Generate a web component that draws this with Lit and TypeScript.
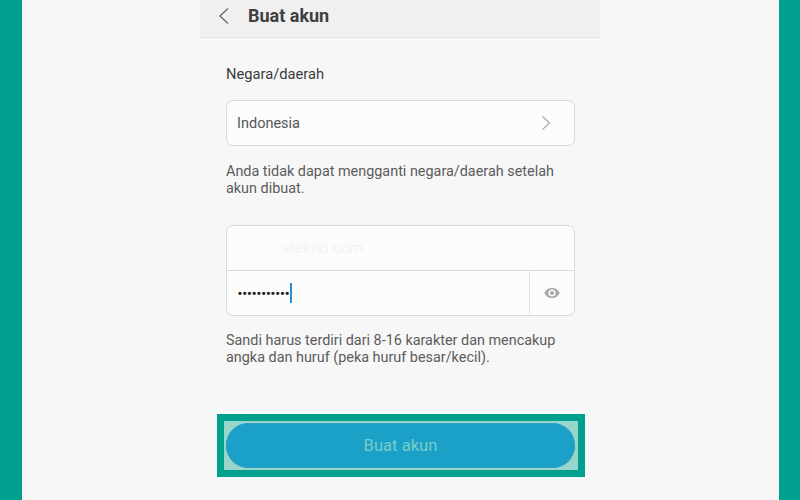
import { LitElement, html, css } from "lit";
import { customElement } from "lit/decorators.js";

@customElement("app-root")
export class AppRoot extends LitElement {
  static styles = css`
    :host { display: block; width: 800px; height: 500px; overflow: hidden; background: #00a08e; font-family: Roboto, "Liberation Sans", sans-serif; }
    .page { width: 757px; height: 500px; margin-left: 22px; background: #f7f7f7; box-sizing: border-box; padding-left: 178px; }
    .phone { width: 400px; display: flex; flex-direction: column; }
    .bar { background: #f0f0f1; border-bottom: 1px solid #e2e2e2; display: flex; align-items: center; padding-bottom: 6px; box-sizing: border-box; height: 38px; }
    .bar svg { margin-left: 18px; width: 12px; height: 18px; }
    .bar h1 { margin: 0 0 0 18px; font-size: 18px; font-weight: 700; color: #3f3f3f; }
    .body { padding: 27px 25px 0 26px; display: flex; flex-direction: column; }
    .label { font-size: 14.7px; line-height: 18px; color: #3c3c3c; }
    .select { margin-top: 17px; height: 46px; box-sizing: border-box; border: 1px solid #dadada; border-radius: 7px; background: #fcfcfc; display: flex; align-items: center; justify-content: space-between; padding: 0 23px 0 10px; font-size: 14.5px; color: #555; }
    .select svg { width: 10px; height: 16px; }
    .note { margin: 17px 0 0; font-size: 14.4px; line-height: 17px; color: #5c5c5c; }
    .form { margin-top: 28px; height: 91px; box-sizing: border-box; border: 1px solid #dadada; border-radius: 7px; background: #fcfcfc; display: flex; flex-direction: column; }
    .row { height: 45px; box-sizing: border-box; display: flex; align-items: center; }
    .row.email { border-bottom: 1px solid #dadada; padding-left: 55px; font-size: 15.5px; color: #f3f3f3; }
    .row.pw { flex: 1; }
    .field { flex: 1; display: flex; align-items: center; padding-left: 11px; height: 100%; }
    .dots { font-size: 11px; letter-spacing: 0.88px; color: #222; font-family: "Liberation Sans", sans-serif; font-weight: 700; }
    .caret { width: 2px; height: 20px; background: #2a8fd0; }
    .eye { width: 45px; height: 100%; border-left: 1px solid #e2e2e2; display: flex; align-items: center; justify-content: center; box-sizing: border-box; }
    .eye svg { width: 16px; height: 12px; }
    .note.pw { margin-top: 16px; }
    .cta { margin: 48px 0 0 -9px; width: 368px; height: 63px; box-sizing: border-box; border: 7px solid #00a08e; background: #98d5cc; padding: 2px 3px 2px 2px; display: flex; }
    .btn { flex: 1; border-radius: 23px; background: #1ba1c7; color: #77cdc8; font-size: 16.6px; display: flex; align-items: center; justify-content: center; border: 0; font-family: inherit; box-shadow: 0 0 0 1px #2f9fc0 inset; }
  `;

  render() {
    return html`
      <div class="page">
        <div class="phone">
          <header class="bar">
            <svg viewBox="0 0 12 18" fill="none" stroke="#666" stroke-width="1.3"><path d="M10 1.500 2 9l8 7.500" /></svg>
            <h1>Buat akun</h1>
          </header>
          <div class="body">
            <div class="label">Negara/daerah</div>
            <div class="select">
              <span>Indonesia</span>
              <svg viewBox="0 0 10 16" fill="none" stroke="#aaa" stroke-width="1.2"><path d="M1.500 1.500 8.500 8l-7 6.500" /></svg>
            </div>
            <p class="note">Anda tidak dapat mengganti negara/daerah setelah akun dibuat.</p>
            <div class="form">
              <div class="row email">stekno.com</div>
              <div class="row pw">
                <div class="field"><span class="dots">•••••••••••</span><span class="caret"></span></div>
                <div class="eye">
                  <svg viewBox="0 0 16 12"><path fill-rule="evenodd" fill="#a8a8a8" d="M8 .8C4.500.8 1.600 3 .3 6c1.300 3 4.200 5.200 7.700 5.200S14.400 9 15.700 6C14.400 3 11.500.8 8 .8ZM8 9.600A3.600 3.600 0 1 1 8 2.400a3.600 3.600 0 0 1 0 7.200Z"/><circle cx="8" cy="6" r="2.100" fill="#a8a8a8"/></svg>
                </div>
              </div>
            </div>
            <p class="note pw">Sandi harus terdiri dari 8-16 karakter dan mencakup angka dan huruf (peka huruf besar/kecil).</p>
            <div class="cta"><button class="btn">Buat akun</button></div>
          </div>
        </div>
      </div>
    `;
  }
}
